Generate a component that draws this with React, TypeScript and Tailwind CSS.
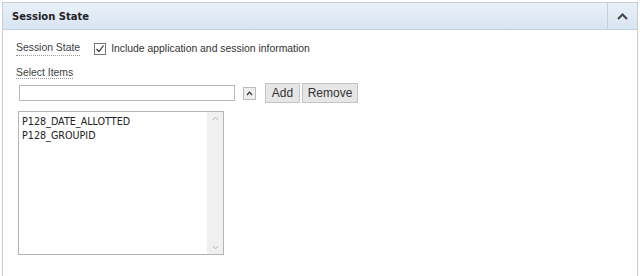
export default function App() {
  return (
    <div className="h-[276px] w-[640px] bg-white pl-[2px] pr-[2px] pt-[2px] font-['Liberation_Sans',Arial,sans-serif]">
      <div className="h-[274px] border-x border-t border-[#c9ced6]">
        {/* Header */}
        <div className="flex h-[27px] items-stretch border-b border-[#c3cfdd] bg-gradient-to-b from-[#e9f0f8] to-[#d9e5f3]">
          <h2 className="flex flex-1 items-center pl-[9px] font-['DejaVu_Sans',sans-serif] text-[10px] font-bold text-[#222]">
            Session State
          </h2>
          <button className="flex w-[30px] items-center justify-center border-l border-[#c3cfdd]">
            <svg width="11" height="7" viewBox="0 0 11 7">
              <path d="M1 6 L5.5 1.5 L10 6" fill="none" stroke="#444" strokeWidth="2" />
            </svg>
          </button>
        </div>

        {/* Body */}
        <div className="pl-[13px] pt-[11px] text-[10.4px] text-[#404040]">
          <div className="flex items-center">
            <span className="border-b border-dotted border-[#999] leading-[14px]">Session State</span>
            <label className="ml-[14px] flex items-center gap-[5px] text-[#333]">
              <span className="flex h-[12px] w-[12px] items-center justify-center border border-[#777] bg-white">
                <svg width="10" height="10" viewBox="0 0 10 10">
                  <path d="M1.5 5 L4 7.5 L8.5 1.5" fill="none" stroke="#333" strokeWidth="1.2" />
                </svg>
              </span>
              Include application and session information
            </label>
          </div>
          <div className="mt-[8px]">
            <span className="border-b border-dotted border-[#999] leading-[14px]">Select Items</span>
          </div>

          <div className="mt-[3px] flex items-center pl-[3px]">
            <input className="h-[16px] w-[216px] border border-[#b8b8b8] bg-white" />
            <button className="ml-[8px] flex h-[13px] w-[13px] items-center justify-center border border-[#bbb] bg-[#eee]">
              <svg width="7" height="5" viewBox="0 0 7 5">
                <path d="M1 4 L3.5 1.2 L6 4" fill="none" stroke="#333" strokeWidth="1.2" />
              </svg>
            </button>
            <button className="ml-[9px] h-[20px] w-[35px] border border-[#c4c4c4] bg-[#e6e6e6] text-[12px] text-[#333]">
              Add
            </button>
            <button className="ml-[2px] h-[20px] w-[56px] border border-[#c4c4c4] bg-[#e6e6e6] text-[12px] text-[#333]">
              Remove
            </button>
          </div>

          <div className="mt-[8px] ml-[2px] flex h-[144px] w-[206px] border border-[#b5b5b5] bg-white">
            <ul className="flex-1 pl-[3px] pt-[3px] font-['DejaVu_Sans',sans-serif] text-[9.6px] leading-[14px] text-[#222]">
              <li>P128_DATE_ALLOTTED</li>
              <li>P128_GROUPID</li>
            </ul>
            <div className="flex w-[16px] flex-col items-center justify-between bg-[#f0f0f0] py-[4px]">
              <svg width="7" height="5" viewBox="0 0 7 5">
                <path d="M1 4 L3.5 1.2 L6 4" fill="none" stroke="#bbb" strokeWidth="1" />
              </svg>
              <svg width="7" height="5" viewBox="0 0 7 5">
                <path d="M1 1 L3.5 3.8 L6 1" fill="none" stroke="#bbb" strokeWidth="1" />
              </svg>
            </div>
          </div>
        </div>
      </div>
    </div>
  )
}
